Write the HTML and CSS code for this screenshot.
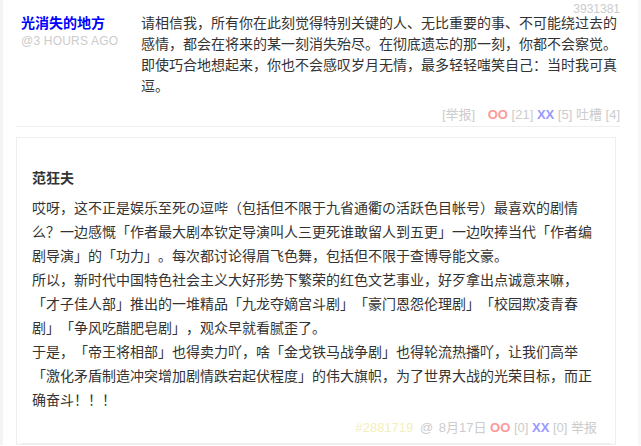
FILE: index.html
```html
<!DOCTYPE html>
<html>
<head lang="zh-CN">
    <meta charset="UTF-8">
    <title>吐槽</title>
    <link rel="stylesheet" href="styles.css">
</head>
<body>
<div id="wrap">
    <ol class="commentlist">
        <li class="comment">
            <span class="righttext">3931381</span>
            <div class="row">
                <div class="author">
                    <strong>光消失的地方</strong>
                    <small>@3 HOURS AGO</small>
                </div>
                <div class="text">
                    <p>请相信我，所有你在此刻觉得特别关键的人、无比重要的事、不可能绕过去的感情，都会在将来的某一刻消失殆尽。在彻底遗忘的那一刻，你都不会察觉。即使巧合地想起来，你也不会感叹岁月无情，最多轻轻嗤笑自己：当时我可真逗。</p>
                </div>
            </div>
            <div class="vote">
                <span class="report">[举报]</span>
                <span class="oo">OO</span> [21]
                <span class="xx">XX</span> [5]
                吐槽 [4]
            </div>
        </li>
    </ol>
    <div class="tucao">
        <div class="tucao-row">
            <div class="tucao-author">范狂夫</div>
            <div class="tucao-content">
                哎呀，这不正是娱乐至死の逗哔（包括但不限于九省通衢の活跃色目帐号）最喜欢的剧情么？一边感慨「作者最大剧本钦定导演叫人三更死谁敢留人到五更」一边吹捧当代「作者编剧导演」的「功力」。每次都讨论得眉飞色舞，包括但不限于查博导能文豪。<br>
                所以，新时代中国特色社会主义大好形势下繁荣的红色文艺事业，好歹拿出点诚意来嘛，「才子佳人部」推出的一堆精品「九龙夺嫡宫斗剧」「豪门恩怨伦理剧」「校园欺凌青春剧」「争风吃醋肥皂剧」，观众早就看腻歪了。<br>
                于是，「帝王将相部」也得卖力吖，啥「金戈铁马战争剧」也得轮流热播吖，让我们高举「激化矛盾制造冲突增加剧情跌宕起伏程度」的伟大旗帜，为了世界大战的光荣目标，而正确奋斗！！！
            </div>
            <div class="tucao-act">
                <span class="tucao-id">#2881719</span>
                <span class="at">@</span> 8月17日
                <span class="oo">OO</span> [0]
                <span class="xx">XX</span> [0]
                举报
            </div>
        </div>
    </div>
</div>
</body>
</html>
```

FILE: styles.css
```css
* { margin: 0; padding: 0; }
body { background: #fff; font-family: "Liberation Sans", "Noto Sans CJK SC", sans-serif;
    color: #333; font-size: 14px; text-spacing-trim: space-all; }
#wrap { padding: 0 18px 0 13px; border-left: 3px solid #f4f4f4; border-right: 3px solid #f7f7f7;
    min-height: 446px; box-sizing: border-box; }
.commentlist { list-style: none; }
.comment { position: relative; border-top: 1px solid #eee; border-bottom: 1px solid #eee;
    padding: 13px 0 1px 5px; margin-top: -1px; }
.righttext { position: absolute; top: 3px; right: 0; font-size: 12px; line-height: 12px; color: #ccc; }
.row { display: flex; }
.author { width: 120px; flex: none; }
.author strong { display: block; color: #00f; font-size: 14px; line-height: 21px; }
.author small { display: block; color: #ccc; font-size: 12px; line-height: 15px; letter-spacing: 0.2px; }
.text p { line-height: 21px; width: 480px; }
.vote { text-align: right; margin-top: 8px; line-height: 20px; font-size: 13px; color: #ccc; }
.report { margin-right: 9px; }
.oo { color: #f99; font-weight: bold; }
.xx { color: #99f; font-weight: bold; }
.tucao { margin: 10px 4px 0 0; border: 1px solid #eee; padding: 0 5px; }
.tucao-row { border-bottom: 1px solid #eee; padding: 28px 13px 5px 10px; }
.tucao-author { font-weight: bold; line-height: 24px; margin-bottom: 6px; }
.tucao-content { line-height: 24px; }
.tucao-act { text-align: right; margin-top: 6px; line-height: 20px; font-size: 13px; color: #ccc; }
.tucao-id { color: #f5eebb; margin-right: 3px; }
.at { margin-right: 2px; }
```
